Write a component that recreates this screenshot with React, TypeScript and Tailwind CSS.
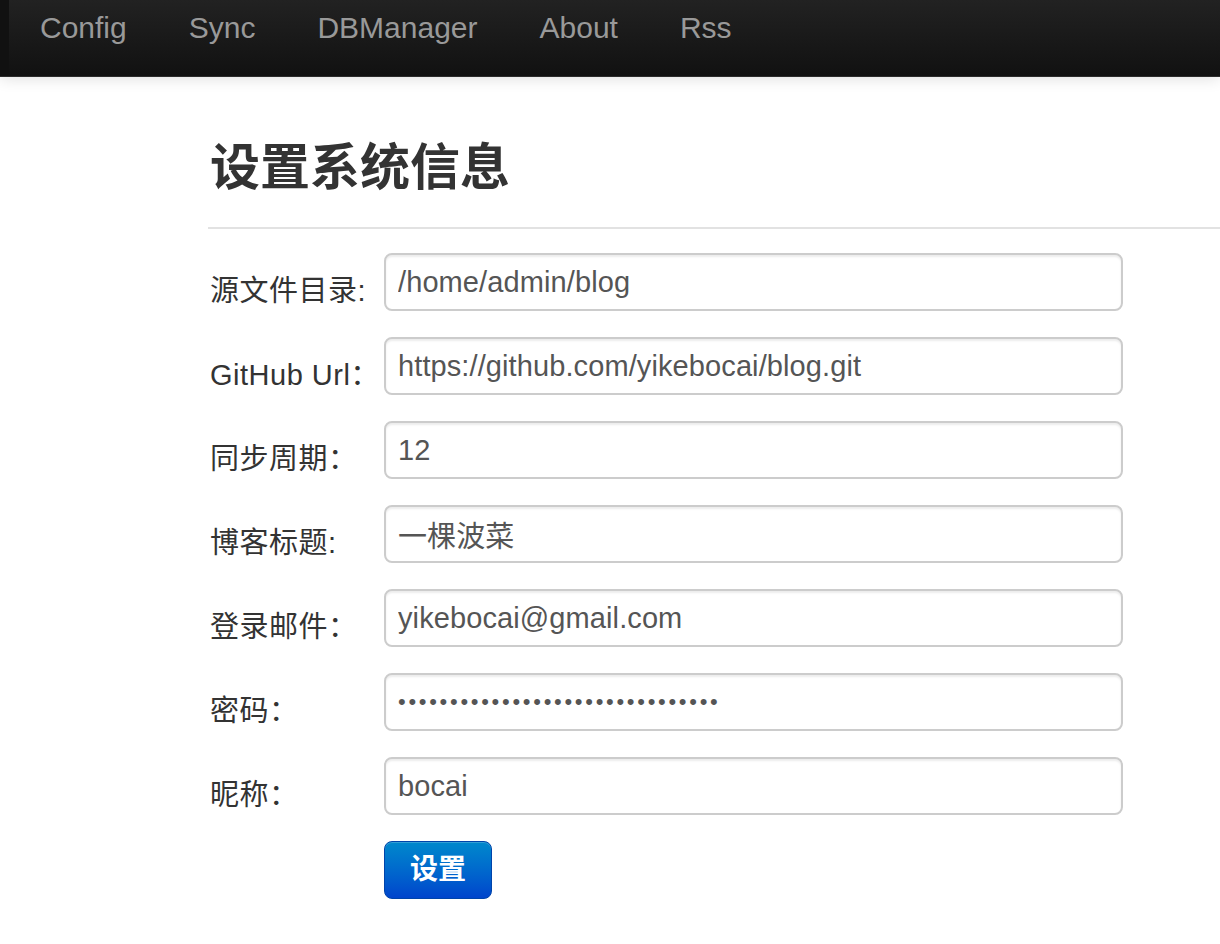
import React from "react";

const NAV = ["Config", "Sync", "DBManager", "About", "Rss"];

const FIELDS: { label: string; value: string; secret?: boolean }[] = [
  { label: "源文件目录:", value: "/home/admin/blog" },
  { label: "GitHub Url：", value: "https://github.com/yikebocai/blog.git" },
  { label: "同步周期：", value: "12" },
  { label: "博客标题:", value: "一棵波菜" },
  { label: "登录邮件：", value: "yikebocai@gmail.com" },
  { label: "密码：", value: "•".repeat(31), secret: true },
  { label: "昵称：", value: "bocai" },
];

const font = "font-['Liberation_Sans','Noto_Sans_CJK_SC',sans-serif]";

export default function App() {
  return (
    <div className={`min-h-[944px] bg-white ${font} overflow-hidden`}>
      {/* navbar */}
      <div className="relative h-[77px] flex bg-gradient-to-b from-[#222] to-[#111] border-b border-[#2c2c2c] shadow-[0_2px_14px_rgba(0,0,0,0.12)]">
        <div className="w-[9px] bg-[#111]" />
        <ul className="flex items-center pb-[20px]">
          {NAV.map((n) => (
            <li key={n} className="px-[31px] text-[30px] leading-none text-[#999]">
              {n}
            </li>
          ))}
        </ul>
      </div>

      <div className="pl-[208px]">
        <div className="mt-[61px] pb-[29px] border-b-2 border-[#e2e2e2]">
          <h1 className="pl-[2px] text-[50px] leading-[60px] font-bold text-[#333]">设置系统信息</h1>
        </div>

        <form className="mt-[24px] flex flex-col gap-[26px]">
          {FIELDS.map((f) => (
            <div key={f.label} className="flex h-[58px]">
              <label className="w-[176px] pl-[2px] pt-[20px] flex items-center text-[29px] tracking-[0.5px] text-[#333] whitespace-nowrap">
                {f.label}
              </label>
              <input
                readOnly
                value={f.value}
                className={
                  "w-[739px] h-[58px] rounded-[8px] border-2 border-[#ccc] px-[12px] text-[#555] shadow-[inset_0_2px_2px_rgba(0,0,0,0.075)] outline-none " +
                  (f.secret ? "text-[22px] tracking-[2.7px]" : "text-[29px] tracking-[0.1px]")
                }
              />
            </div>
          ))}
          <div className="flex">
            <div className="w-[176px]" />
            <button
              type="button"
              className="w-[108px] h-[58px] rounded-[8px] border border-[#0044aa] bg-gradient-to-b from-[#0088cc] to-[#0044cc] text-white text-[28px] font-bold shadow-[inset_0_1px_0_rgba(255,255,255,0.2)]"
            >
              设置
            </button>
          </div>
        </form>
      </div>
    </div>
  );
}
